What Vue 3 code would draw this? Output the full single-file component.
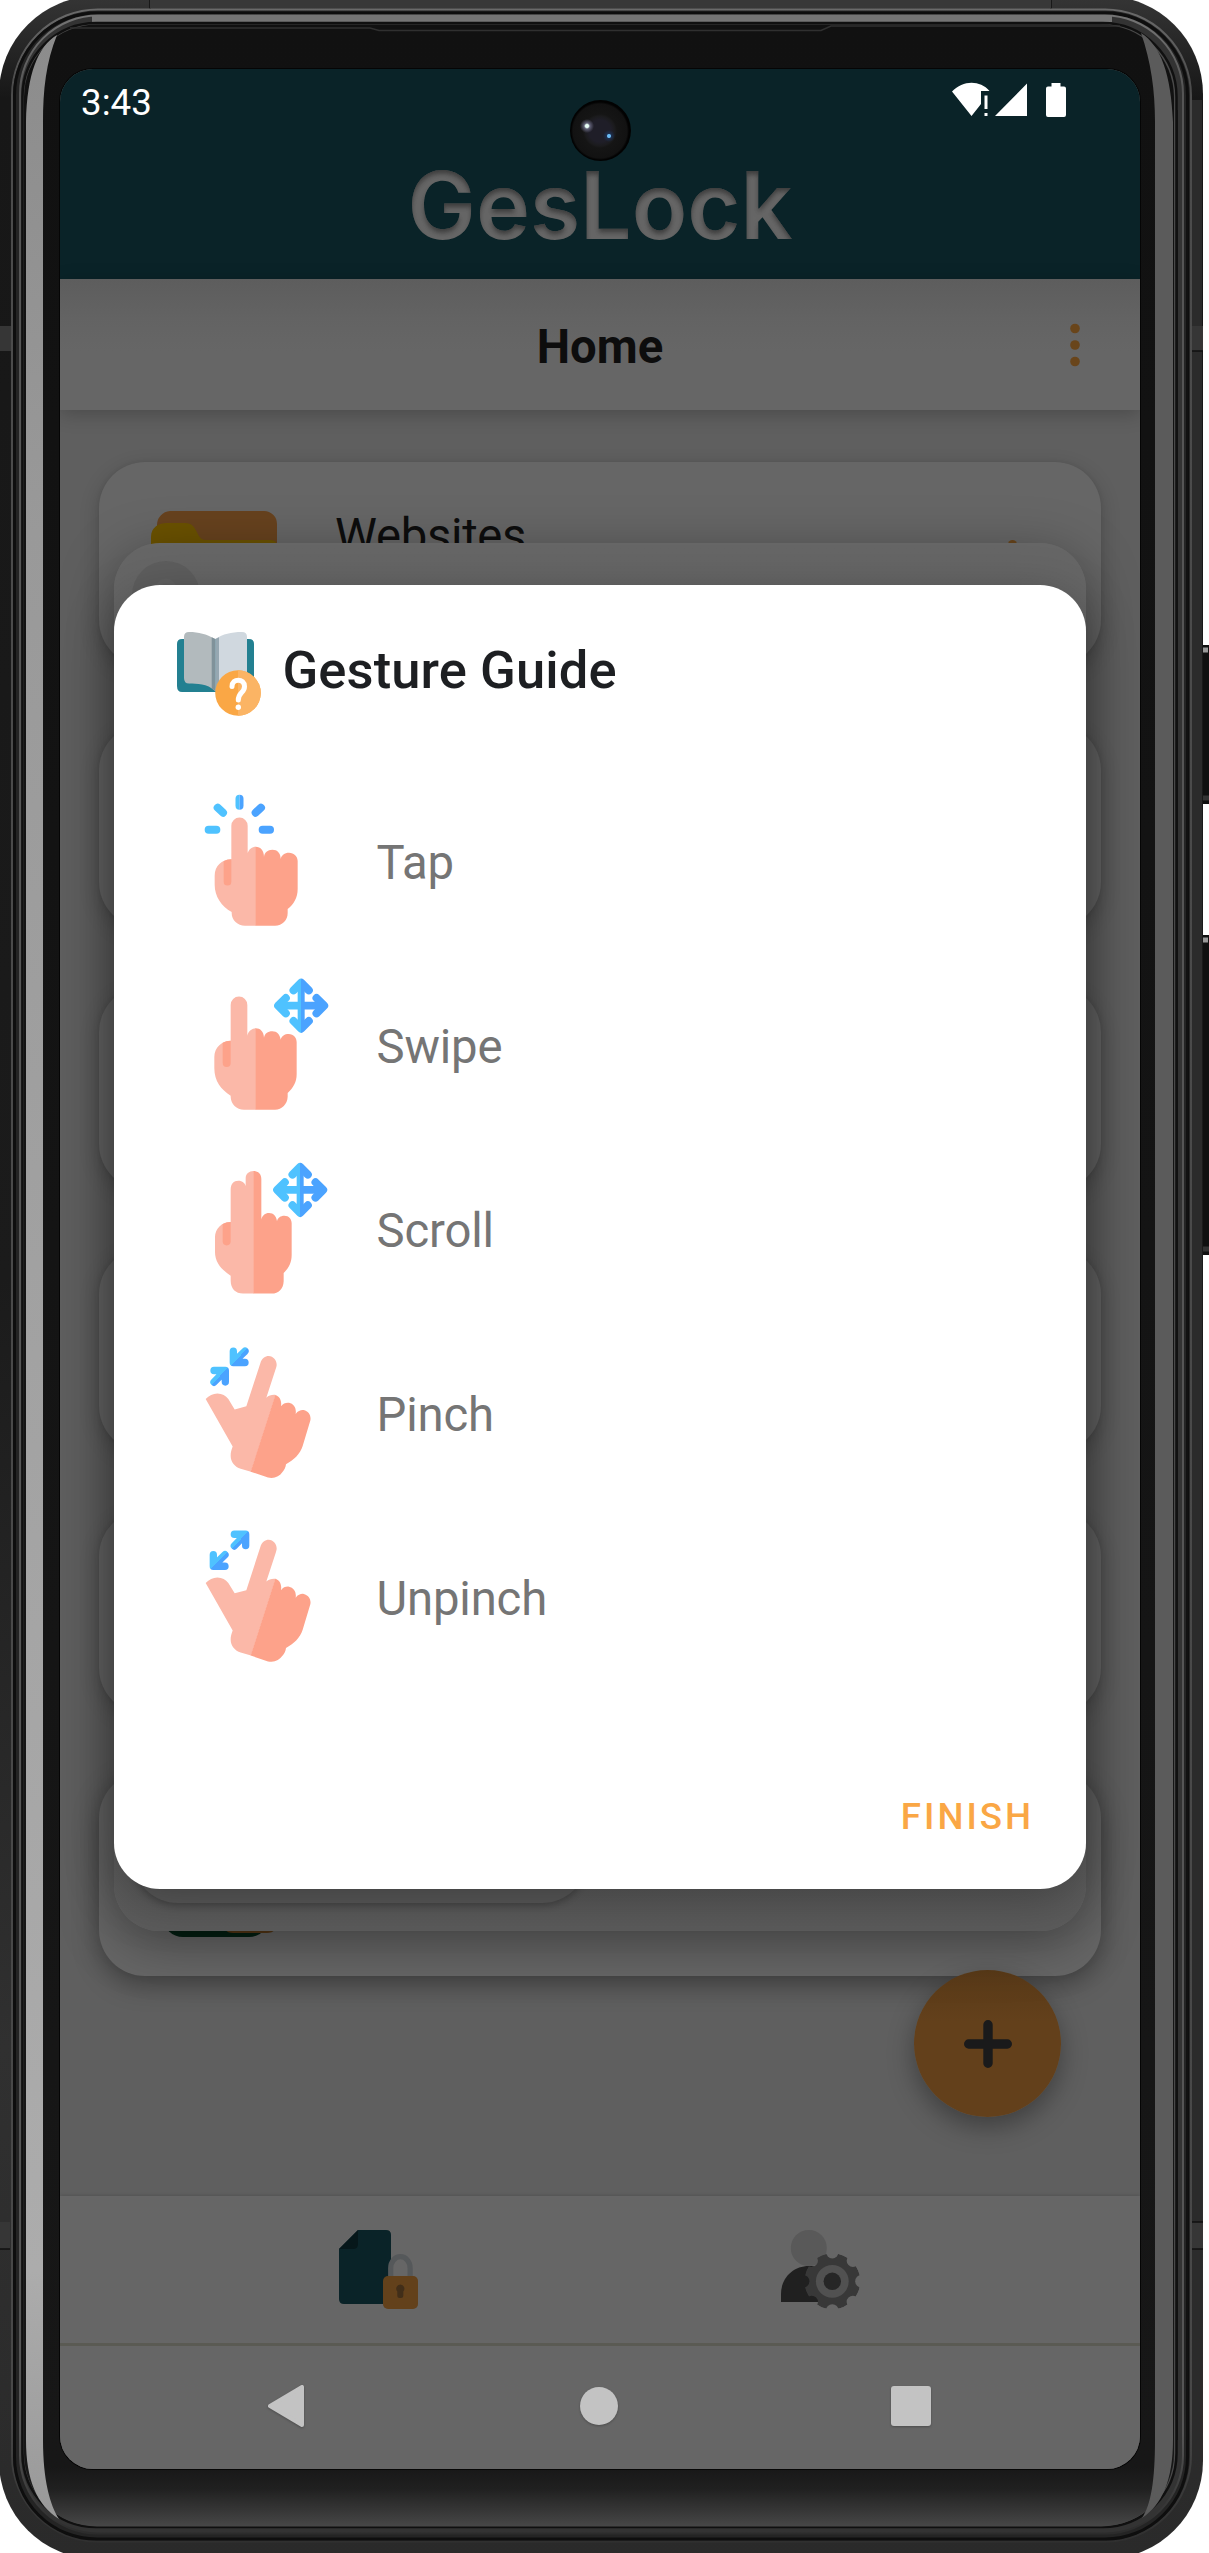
<script setup>
const cards = [
  { title: 'Websites', icon: 'folder' },
  { title: '', icon: '' },
  { title: '', icon: '' },
  { title: '', icon: '' },
  { title: '', icon: '' },
  { title: '', icon: 'app' }
]

const gestures = [
  { id: 'tap', label: 'Tap', box: '130 70 390 405' },
  { id: 'swipe', label: 'Swipe', box: '130 622 390 405' },
  { id: 'scroll', label: 'Scroll', box: '130 61 390 392' },
  { id: 'pinch', label: 'Pinch', box: '130 595 390 392' },
  { id: 'unpinch', label: 'Unpinch', box: '130 1130 390 392' }
]
</script>

<template>
  <div class="stage">
    <svg class="frame" width="1209" height="2553" viewBox="0 0 1209 2553" aria-hidden="true">
      <defs>
        <linearGradient id="shell" x1="0" y1="0" x2="0" y2="1">
          <stop offset="0" stop-color="#353535" />
          <stop offset="0.04" stop-color="#171717" />
          <stop offset="0.5" stop-color="#1b1b1b" />
          <stop offset="0.8" stop-color="#303030" />
          <stop offset="1" stop-color="#2a2a2a" />
        </linearGradient>
        <linearGradient id="bezel" x1="0" y1="0" x2="0" y2="1">
          <stop offset="0" stop-color="#111" />
          <stop offset="0.976" stop-color="#171717" />
          <stop offset="0.985" stop-color="#202020" />
          <stop offset="1" stop-color="#474747" />
        </linearGradient>
        <linearGradient id="shineLeft" x1="0" y1="0" x2="0" y2="1">
          <stop offset="0" stop-color="#8c8c8c" />
          <stop offset="0.2" stop-color="#999" />
          <stop offset="0.9" stop-color="#acacac" />
          <stop offset="1" stop-color="#999" />
        </linearGradient>
        <linearGradient id="ring" x1="0" y1="0" x2="0" y2="1">
          <stop offset="0" stop-color="#747474" />
          <stop offset="0.03" stop-color="#555" />
          <stop offset="0.96" stop-color="#555" />
          <stop offset="1" stop-color="#2c2c2c" />
        </linearGradient>
        <linearGradient id="groove" x1="0" y1="0" x2="0" y2="1">
          <stop offset="0" stop-color="#6a6a6a" />
          <stop offset="0.03" stop-color="#4c4c4c" />
          <stop offset="0.95" stop-color="#484848" />
          <stop offset="1" stop-color="#303030" />
        </linearGradient>
      </defs>
      <g fill="#101010">
        <rect x="1200" y="645" width="14" height="159" rx="2" />
        <rect x="1200" y="935" width="14" height="320" rx="2" />
      </g>
      <path d="M1203 650h5M1203 940h5" stroke="#999" stroke-width="5" />
      <path d="M1202 798h7M1202 1249h7" stroke="#333" stroke-width="5" />
      <rect x="-1" y="-4" width="1204" height="2563" rx="98" fill="url(#shell)" />
      <rect x="1187" y="100" width="15" height="2360" fill="#2b2b2b" />
      <path d="M0 326h11v25H0zM0 2222h10v27H0zM1189 326h14v25h-14zM1189 2222h14v27h-14z" fill="#363636" />
      <path d="M0 2249h10M1190 2222h13M1190 2249h13M1190 351h13M150 0V9M1051 0V10" stroke="#111" stroke-width="1.5" />
      <rect x="150" y="0" width="901" height="8" fill="#383838" />
      <rect x="12" y="9.5" width="1179" height="2532" rx="86" fill="#252525" stroke="url(#groove)" stroke-width="2" />
      <rect x="14.5" y="13" width="1173" height="2526" rx="82" fill="#242424" stroke="#0e0e0e" stroke-width="3" />
      <rect x="20" y="15.5" width="1163" height="2518" rx="78" fill="#333" stroke="url(#ring)" stroke-width="2" />
      <path d="M92 18.5H1112" stroke="#757575" stroke-width="7" />
      <rect x="22.5" y="23" width="1154" height="2504" rx="74" fill="#4a4a4a" stroke="#101010" stroke-width="2.5" />
      <rect x="24" y="24.5" width="1150" height="2502" rx="73" fill="url(#bezel)" />
      <path d="M70 28H370L379 30.500H821L831 26H1120" fill="none" stroke="#303030" stroke-width="1.500" />
      <path d="M26 122C27 74 38 46 57 35C46 62 43 90 43 122V2440C43 2480 50 2505 59 2519C37 2505 26 2480 26 2440Z" fill="url(#shineLeft)" />
      <path d="M1173 122C1171 74 1161 46 1141 33C1151 62 1155 90 1155 122V2440C1155 2480 1151 2505 1142 2518C1162 2505 1173 2480 1173 2440Z" fill="#5b5b5b" />
      <path d="M1177 110V2440M1187 110V2440" stroke="#111" stroke-width="2" />
      <rect x="59" y="68" width="1082" height="2402" rx="34" fill="#050505" />
    </svg>

    <main class="screen">
      <header class="brand">
        <div class="status">
          <span class="clock">3:43</span>
          <svg class="signals" width="114" height="36" viewBox="952 82 114 36">
            <g fill="#fff">
              <path d="M952 91.500C963 80 980 80 989.500 91H981V104L971.500 116Z" />
              <path d="M984.500 95.500h3v13.500h-3zM984.500 113h3v3h-3zM1027 83.500V116H995Z" />
              <path d="M1051.500 83h9v3.500h3.500a2 2 0 0 1 2 2V115a2 2 0 0 1-2 2h-16a2 2 0 0 1-2-2V88.500a2 2 0 0 1 2-2h3.500z" />
            </g>
          </svg>
        </div>
        <svg class="logo" width="400" height="135" viewBox="0 0 400 135">
          <defs>
            <filter id="inset" x="-5%" y="-10%" width="110%" height="120%">
              <feOffset in="SourceAlpha" dx="0" dy="4" result="moved" />
              <feGaussianBlur in="moved" stdDeviation="2.500" result="soft" />
              <feComposite in="SourceAlpha" in2="soft" operator="out" result="edge" />
              <feFlood flood-color="#000" flood-opacity="0.65" />
              <feComposite in2="edge" operator="in" result="shade" />
              <feMerge>
                <feMergeNode in="SourceGraphic" />
                <feMergeNode in="shade" />
              </feMerge>
            </filter>
          </defs>
          <text x="7.500" y="99" textLength="385" lengthAdjust="spacingAndGlyphs" filter="url(#inset)">GesLock</text>
        </svg>
      </header>

      <div class="toolbar">
        <h1>Home</h1>
        <svg class="more" width="12" height="44" viewBox="0 0 12 44" fill="#69451b">
          <circle cx="6" cy="5.500" r="4.800" /><circle cx="6" cy="22" r="4.800" /><circle cx="6" cy="38.500" r="4.800" />
        </svg>
      </div>

      <section class="content">
        <article v-for="(card, i) in cards" :key="i" class="card">
          <svg v-if="card.icon === 'folder'" class="folder" width="128" height="90" viewBox="0 0 128 90">
            <path d="M6 14A14 14 0 0 1 19 0H113A13 13 0 0 1 126 13V80H6Z" fill="#67421e" />
            <path d="M0 26C0 16 8 12 16 12H34C48 12 44 29 55 29H120Q126 29 126 36V84H0Z" fill="#6b5200" />
          </svg>
          <svg v-if="card.icon === 'app'" class="app" width="116" height="44" viewBox="0 0 116 44">
            <rect x="0" y="-60" width="106" height="100" rx="20" fill="#031f12" />
            <rect x="58" y="-20" width="58" height="56" rx="12" fill="#553715" />
          </svg>
          <h2 v-if="card.title">{{ card.title }}</h2>
          <i v-if="card.title" class="dot"></i>
        </article>
      </section>

      <button class="fab" aria-label="Add">
        <svg width="48" height="48" viewBox="0 0 48 48">
          <path d="M24 4.700V43.300M4.700 24H43.300" stroke="#1a1a1b" stroke-width="9.400" stroke-linecap="round" />
        </svg>
      </button>

      <nav class="tabs">
        <svg width="79" height="79" viewBox="0 0 79 79">
          <path d="M0 19L19 0H47Q52 0 52 5V69Q52 74 47 74H5Q0 74 0 69Z" fill="#0a2328" />
          <path d="M0 19L19 0V14Q19 19 14 19Z" fill="#06171a" />
          <path d="M51.700 48V38A9.700 11.300 0 0 1 71.100 38V48" fill="none" stroke="#55585a" stroke-width="5.200" />
          <rect x="44" y="46" width="35" height="33" rx="5" fill="#63411b" />
          <path d="M61.300 54.500a4.200 4.200 0 0 1 3 7V65.500a2.500 2.500 0 0 1-2.500 2.500h-1a2.500 2.500 0 0 1-2.500-2.500V61.500a4.200 4.200 0 0 1 3-7z" fill="#412e19" />
        </svg>
        <svg width="79" height="79" viewBox="0 0 79 79">
          <defs>
            <mask id="teeth">
              <circle cx="51.300" cy="51.300" r="28" fill="#fff" />
              <circle v-for="n in 8" :key="n" cx="80.500" cy="51.300" r="6.300" :transform="`rotate(${n * 45} 51.300 51.300)`" fill="#000" />
            </mask>
          </defs>
          <circle cx="27.800" cy="18" r="18" fill="#595959" />
          <path d="M0 72V64C0 48 12 36 28 36S56 48 56 64V72Z" fill="#202020" />
          <circle cx="51.300" cy="51.300" r="28" fill="#383838" mask="url(#teeth)" />
          <circle cx="51.300" cy="51.300" r="16.400" fill="#515151" />
          <circle cx="51.300" cy="51.300" r="8.700" fill="#262626" />
        </svg>
      </nav>

      <nav class="system">
        <svg width="40" height="46" viewBox="0 0 40 46"><path d="M3 23L35 4V42Z" fill="#c3c3c3" stroke="#c3c3c3" stroke-width="4" stroke-linejoin="round" /></svg>
        <i class="home"></i>
        <i class="recent"></i>
      </nav>

      <!-- dialog waiting behind the guide -->
      <div class="under">
        <div class="badge">
          <svg width="26" height="16" viewBox="0 0 26 16"><path d="M5 16C5 4 21 4 21 16" fill="none" stroke="#666" stroke-width="5" /></svg>
        </div>
        <div class="panel"></div>
      </div>

      <div class="dialog" role="dialog">
        <header class="heading">
          <svg width="84" height="84" viewBox="0 0 84 84">
            <path d="M5 7H72Q77 7 77 12V60H5Q0 60 0 54V12Q0 7 5 7Z" fill="#238091" />
            <path d="M7 5Q7 0 12 0C22 0 29 2 38 7V59C30 51 20 52 12 51.500Q7 51.500 7 46Z" fill="#b2babd" />
            <path d="M70 5Q70 0 65 0C54 0 46 2 38.500 7V59H70Z" fill="#d0d8df" />
            <path d="M34.700 5.300L38.300 7V59L34.700 56.500Z" fill="#80929a" />
            <path d="M42 5.300L38.300 7V59H42Z" fill="#96a7b1" />
            <circle cx="61" cy="61" r="22.800" fill="#faa745" />
            <path d="M61 38.200A22.800 22.800 0 0 1 61 83.800Z" fill="#fbb464" />
            <path d="M55 54.500C55 46 67.500 46 67.500 54.500C67.500 61 61.300 60 61.300 68" fill="none" stroke="#fff" stroke-width="5" stroke-linecap="round" />
            <circle cx="61.300" cy="75.300" r="2.700" fill="#fff" />
          </svg>
          <h3>Gesture Guide</h3>
        </header>

        <ul class="list">
          <li v-for="g in gestures" :key="g.id">
            <svg width="130" height="135" :viewBox="g.box" preserveAspectRatio="none">
              <defs>
                <linearGradient :id="g.id + '-cross'" gradientUnits="userSpaceOnUse" x1="-82" x2="82" y1="0" y2="0">
                  <stop offset="0.5" stop-color="#4fc2ff" /><stop offset="0.5" stop-color="#4ba3ff" />
                </linearGradient>
                <linearGradient :id="g.id + '-diag'" gradientUnits="userSpaceOnUse" x1="0" y1="0" x2="56" y2="56">
                  <stop offset="0.5" stop-color="#4fc2ff" /><stop offset="0.5" stop-color="#4ba3ff" />
                </linearGradient>
              </defs>

              <template v-if="g.id === 'tap'">
                <g stroke-width="24" stroke-linecap="round">
                  <path d="M147 180H170M174 114L190 129" stroke="#4fc2ff" />
                  <path d="M309 180H331M304 114L288 129" stroke="#4ba3ff" />
                </g>
                <path d="M239.500 75a12 12 0 0 0-12 12v21a12 12 0 0 0 12 12z" fill="#4fc2ff" />
                <path d="M239.500 75a12 12 0 0 1 12 12v21a12 12 0 0 1-12 12z" fill="#4ba3ff" />
                <path class="skin" d="M215 168a24.500 24.500 0 0 1 49 0V250C268 238 277 231 289 231V468H256C234 468 216 452 216 430V427C185 409 165 380 165 345V318C165 290 186 269 215 269Z" />
                <path class="flush" d="M192 275Q202 269 215 269V336a11.500 11.500 0 0 1-23 0Z" />
                <path class="flush" d="M288 231C303 231 313 243 313 262C314 249 324 240 338 240C353 240 363 250 363 268C365 257 375 249 388 249C403 249 414 260 414 274V358C414 385 402 404 384 418V430C384 452 368 468 346 468H288Z" />
              </template>

              <template v-else-if="g.id === 'swipe'">
                <path class="skin" d="M213 706a24.500 25 0 0 1 50 0V798C266 785 277 776 289 776V1020H253C231 1020 213 1002 213 981V978C184 960 164 934 164 896V862C164 834 186 813 213 813Z" />
                <path class="flush" d="M189 819Q200 813 213 813V880a12 12 0 0 1-24 0Z" />
                <path class="flush" d="M288 776C302 776 312 786 313 804C315 792 324 785 338 785C352 785 361 795 363 810C366 799 375 793 387 793C402 793 411 804 411 818V914C411 937 401 955 384 970V981C383 1003 367 1020 346 1020H288Z" />
              </template>

              <template v-else-if="g.id === 'scroll'">
                <path class="skin" d="M213 143C213 128 222 118 236 118C248 118 257 126 258 134V112C258 98 268 90 282 90V446H250C228 446 213 432 213 408V394C186 376 166 356 166 325V282C166 258 186 238 213 238Z" />
                <path class="flush" d="M189 244Q199 238 213 238V294a12 12 0 0 1-24 0Z" />
                <path class="flush" d="M281 90C295 90 305 98 305 113V231C308 219 316 212 328 212C342 212 350 221 352 236C354 226 363 220 374 220C388 220 396 230 396 242V334C396 356 387 372 372 386V410C371 432 357 446 336 446H281Z" />
              </template>

              <g v-else :transform="g.id === 'unpinch' ? 'translate(0 534.500)' : ''">
                <path class="skin" d="M138 752C148 742 160 736 173 736C188 736 198 742 206 752L225 782L260 773L302 648C306 633 317 627 327 627C341 627 351 640 351 652C351 656 349 662 348 665L320 748C328 741 337 739 348 740L274 963L243 954C226 949 213 935 213 917C213 907 215 900 219 890Z" />
                <path class="flush" d="M347 740C359 744 367 755 364 773C370 765 379 762 388 763C402 766 411 778 408 795C415 786 424 783 432 784C447 787 455 801 452 814L429 888C421 912 402 929 379 941C378 950 374 957 369 963C359 977 344 984 325 980L273 963Z" />
              </g>

              <g
                v-if="g.id === 'swipe' || g.id === 'scroll'"
                :transform="g.id === 'swipe' ? 'translate(424.500 708)' : 'translate(421.500 145) scale(1 .967)'"
                :stroke="`url(#${g.id}-cross)`"
                fill="none"
                stroke-linejoin="round"
                stroke-linecap="round"
              >
                <path d="M-23 -46L0 -69L23 -46M-23 46L0 69L23 46M-46 -23L-69 0L-46 23M46 -23L69 0L46 23" stroke-width="24" />
                <path d="M-60 0H60M-10.500 0H10.500" stroke-width="23" />
                <path d="M0 -64L.01 64" stroke-width="21" />
              </g>

              <g
                v-if="g.id === 'pinch' || g.id === 'unpinch'"
                :stroke="`url(#${g.id}-diag)`"
                fill="none"
                stroke-linejoin="round"
                stroke-linecap="round"
                stroke-width="22"
              >
                <path :transform="g.id === 'pinch' ? 'translate(210 602)' : 'translate(150 1194)'" d="M11 11V44H46M16 39L46 11" />
                <path :transform="g.id === 'pinch' ? 'translate(152 658)' : 'translate(213 1134)'" d="M11 11H45V44M40 16L11 45" />
              </g>
            </svg>
            <span>{{ g.label }}</span>
          </li>
        </ul>

        <button class="finish">FINISH</button>
      </div>

      <div class="camera"></div>
    </main>
  </div>
</template>

<style>
body { margin: 0; background: #fff; }
</style>

<style scoped>
.stage {
  position: relative;
  box-sizing: border-box;
  width: 1209px;
  height: 2553px;
  padding: 69px 69px 84px 60px;
  overflow: hidden;
  font-family: Roboto, "Liberation Sans", sans-serif;
}
.frame { position: absolute; inset: 0; }
svg { display: block; flex: none; }
h1, h2, h3, ul { margin: 0; padding: 0; }
button { border: 0; padding: 0; background: none; font-family: inherit; }

.screen {
  position: relative;
  display: flex;
  flex-direction: column;
  width: 1080px;
  height: 2400px;
  overflow: hidden;
  border-radius: 33px;
  background: #5f5f5f;
}
.brand { height: 210px; background: #0a2328; flex: none; }
.status {
  display: flex;
  justify-content: space-between;
  height: 82px;
  padding: 0 74px 0 21px;
}
.clock { margin-top: 11.500px; font-size: 36.750px; line-height: 44px; color: #fff; }
.signals { margin-top: 13px; }
.logo { margin: -11px auto 0; }
.logo text { font: 600 93px Inter, sans-serif; fill: #666; }

.toolbar {
  position: relative;
  z-index: 1;
  display: flex;
  align-items: center;
  justify-content: flex-end;
  height: 131px;
  flex: none;
  box-sizing: border-box;
  padding-right: 59px;
  background: linear-gradient(#5d5d5d, #636363 30%, #666 55%);
  box-shadow: 0 4px 18px rgba(0, 0, 0, 0.22);
}
.toolbar h1 {
  flex: 1;
  padding-left: 71px;
  text-align: center;
  font-size: 47.250px;
  line-height: 56px;
  font-weight: 700;
  color: #0d0d0d;
  padding-top: 4px;
}

.content {
  display: flex;
  flex-direction: column;
  gap: 58px;
  height: 1786px;
  flex: none;
  box-sizing: border-box;
  padding: 52px 39px 0;
}
.card {
  display: flex;
  height: 204px;
  flex: none;
  box-sizing: border-box;
  padding: 49px 84px 0 52px;
  border-radius: 46px;
  background: #666;
  box-shadow: 0 6px 20px rgba(0, 0, 0, 0.2), 0 0 4px rgba(0, 0, 0, 0.08);
}
.card:last-child { box-shadow: 0 8px 26px rgba(0, 0, 0, 0.36); }
.folder { margin-right: 56px; }
.card h2 { font-size: 47.250px; line-height: 56px; font-weight: 400; letter-spacing: -0.300px; color: #0d0d0d; margin-top: -3px; }
.dot { width: 9px; height: 9px; margin: 29px 0 0 auto; border-radius: 50%; background: #69451b; }
.app { margin: 76px 0 0 12px; }

.fab {
  position: absolute;
  left: 854px;
  top: 1901px;
  width: 147px;
  height: 147px;
  display: grid;
  place-items: center;
  border-radius: 50%;
  background: linear-gradient(#593a18, #63401b 35%);
  box-shadow: 0 10px 26px rgba(0, 0, 0, 0.34);
}

.tabs {
  display: flex;
  justify-content: space-between;
  height: 150px;
  flex: none;
  box-sizing: border-box;
  padding: 34px 280px 0 279px;
  background: #666;
  border-bottom: 3px solid #5a5a53;
  box-shadow: 0 -1px 3px rgba(0, 0, 0, 0.12);
}
.content { height: 1786px; }
.system {
  display: flex;
  align-items: center;
  justify-content: space-between;
  height: 123px;
  flex: none;
  box-sizing: border-box;
  padding: 0 209px 3px 207px;
  background: #666;
}
.system i, .system svg { filter: drop-shadow(0 1px 1px rgba(0, 0, 0, 0.25)); }
.home { width: 38px; height: 38px; border-radius: 50%; background: #c3c3c3; }
.recent { width: 40px; height: 40px; border-radius: 3px; background: #c3c3c3; }

.under {
  position: absolute;
  left: 54px;
  top: 474px;
  width: 972px;
  height: 1388px;
  display: flex;
  flex-direction: column;
  justify-content: space-between;
  box-sizing: border-box;
  padding: 18px 18px 28px;
  border-radius: 46px;
  background: linear-gradient(#666, #646464 50%, #5c5c5c);
  box-shadow: 0 12px 54px rgba(0, 0, 0, 0.36);
}
.badge {
  display: flex;
  justify-content: center;
  width: 68px;
  height: 68px;
  border-radius: 50%;
  background: #5e5e5e;
}
.badge svg { margin-top: 13px; opacity: 0.5; }
.panel {
  width: 456px;
  height: 120px;
  border-radius: 46px;
  background: #5b5b5b;
  box-shadow: 0 3px 7px rgba(0, 0, 0, 0.24);
}

.dialog {
  position: absolute;
  left: 54px;
  top: 516px;
  width: 972px;
  height: 1304px;
  display: flex;
  flex-direction: column;
  box-sizing: border-box;
  padding: 47px 52px 50px 63px;
  border-radius: 46px;
  background: #fff;
  box-shadow: 0 12px 50px rgba(0, 0, 0, 0.3);
}
.heading { display: flex; gap: 21.500px; height: 84px; }
.heading h3 { margin-top: 7px; font-size: 52.500px; line-height: 62px; font-weight: 500; letter-spacing: 0.100px; color: #1d1f22; }
.list { margin: 55px 0 0 26px; list-style: none; }
.list li { display: flex; align-items: center; gap: 43.500px; height: 184px; }
.list svg { margin-top: -5px; }
.list span { font-size: 47.250px; line-height: 56px; letter-spacing: -0.150px; color: #757575; }
.skin { fill: #fbb8a8; }
.flush { fill: #fda28a; }
.finish {
  margin-top: auto;
  align-self: flex-end;
  font-size: 36.750px;
  line-height: 44px;
  font-weight: 500;
  letter-spacing: 2.950px;
  color: #faa745;
}

.camera {
  position: absolute;
  left: 510px;
  top: 31px;
  width: 61px;
  height: 61px;
  border-radius: 50%;
  background:
    radial-gradient(circle at 17px 26px, #e8fff6 0 1.500px, rgba(112, 112, 138, 0.8) 3px, transparent 7px),
    radial-gradient(circle at 39px 36px, #6bbcf5 0 1.500px, rgba(29, 58, 104, 0.6) 2.500px, transparent 6px),
    radial-gradient(circle at 30px 31px, #1f1e28 0 11px, #1b1b1d 15px, #151515 17px, #121212 27px, #020202 29px);
}
</style>
